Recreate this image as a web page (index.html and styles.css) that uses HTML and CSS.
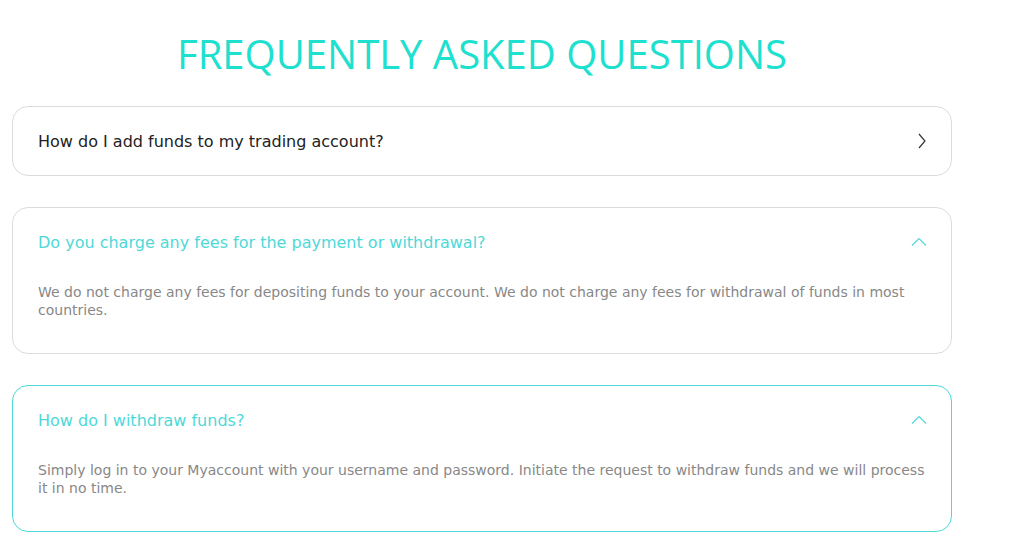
FILE: index.html
```html
<!DOCTYPE html>
<html lang="en">
<head>
  <meta charset="UTF-8">
  <title>FAQ</title>
  <link rel="stylesheet" href="styles.css">
</head>
<body>

  <section class="faq">
    <h1 class="faq-title">FREQUENTLY ASKED QUESTIONS</h1>

    <div class="faq-item">
      <div class="faq-question">
        <span>How do I add funds to my trading account?</span>
        <svg class="faq-icon" width="10" height="16" viewBox="0 0 10 16">
          <path d="M2 1 L8 8 L2 15" fill="none" stroke="#333" stroke-width="1.2"/>
        </svg>
      </div>
    </div>

    <div class="faq-item open">
      <div class="faq-question">
        <span>Do you charge any fees for the payment or withdrawal?</span>
        <svg class="faq-icon" width="16" height="10" viewBox="0 0 16 10">
          <path d="M1 8.5 L8 1.5 L15 8.5" fill="none" stroke="#4fd8d8" stroke-width="1.1"/>
        </svg>
      </div>
      <div class="faq-answer">
        We do not charge any fees for depositing funds to your account. We do not charge any fees for withdrawal of funds in most countries.
      </div>
    </div>

    <div class="faq-item open active">
      <div class="faq-question">
        <span>How do I withdraw funds?</span>
        <svg class="faq-icon" width="16" height="10" viewBox="0 0 16 10">
          <path d="M1 8.5 L8 1.5 L15 8.5" fill="none" stroke="#4fd8d8" stroke-width="1.1"/>
        </svg>
      </div>
      <div class="faq-answer">
        Simply log in to your Myaccount with your username and password. Initiate the request to withdraw funds and we will process it in no time.
      </div>
    </div>
  </section>

</body>
</html>
```

FILE: styles.css
```css
body {
  margin: 0;
  font-family: "DejaVu Sans", sans-serif;
  background-color: #fff;
  color: #222;
}

.faq {
  width: 940px;
  margin-left: 12px;
  padding-top: 30px;
}

.faq-title {
  margin: 0 0 28px;
  text-align: center;
  font-family: "Open Sans", sans-serif;
  font-weight: 400;
  font-size: 40px;
  line-height: 48px;
  color: #1ee0cf;
}

.faq-item {
  border: 1px solid #dcdcdc;
  border-radius: 16px;
  margin-bottom: 31px;
}

.faq-item.active {
  border-color: #4dd9d9;
}

.faq-question {
  display: flex;
  justify-content: space-between;
  align-items: center;
  height: 68px;
  padding: 0 24px 0 25px;
  font-size: 16px;
  color: #222;
}

.open .faq-question {
  color: #4fd8d8;
}

.faq-answer {
  padding: 7px 25px 34px;
  font-size: 14px;
  line-height: 18px;
  color: #888;
}
```
